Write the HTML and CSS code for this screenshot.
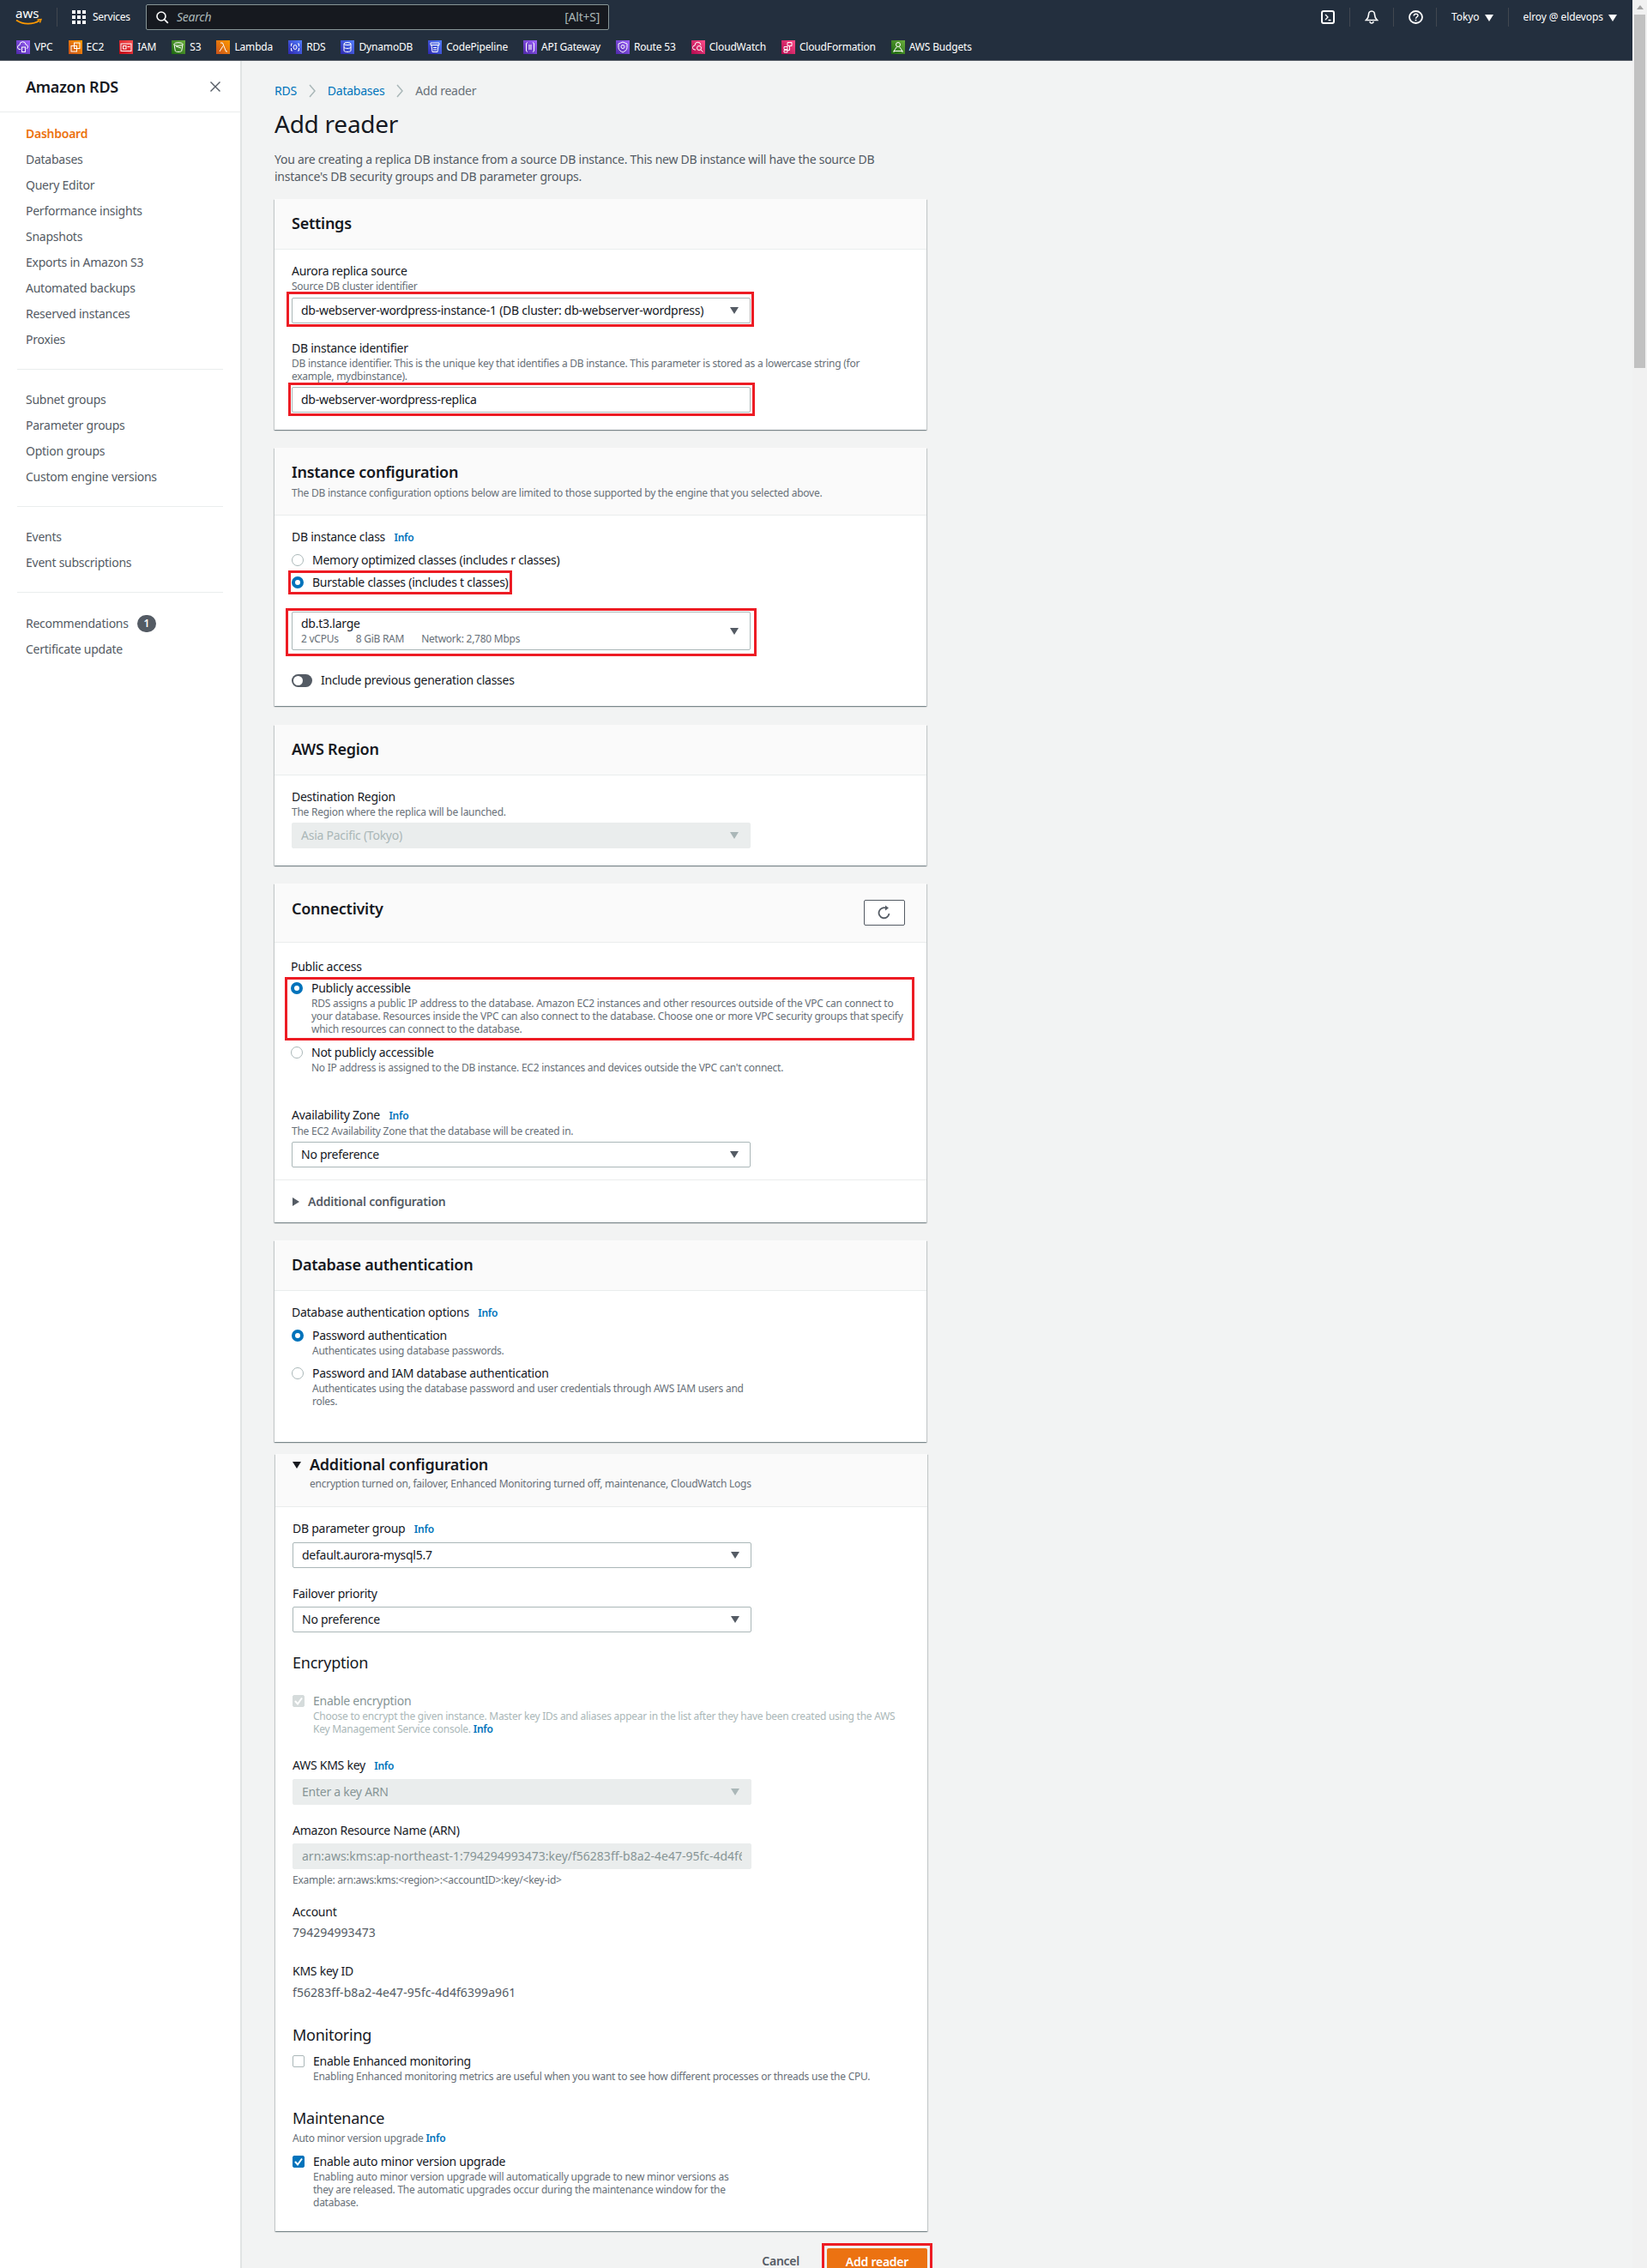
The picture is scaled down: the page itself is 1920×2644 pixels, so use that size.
FILE: index.html
```html
<!DOCTYPE html>
<html lang="en">
<head>
<meta charset="utf-8">
<title>Add reader</title>
<link rel="stylesheet" href="styles.css">
</head>
<body>
<header class="topnav">
  <div class="nav-row1">
    <svg class="aws" viewBox="0 0 31 20" width="31" height="20"><text x="0" y="11" class="aws-t">aws</text><path d="M1 13.500c8 5.500 19 5.500 27 .5" fill="none" stroke="#f90" stroke-width="1.800"/><path d="M25.500 13l4.500-.5-1.500 4" fill="none" stroke="#f90" stroke-width="1.400"/></svg>
    <span class="nav-sep first"></span>
    <svg class="grid" viewBox="0 0 16 16" width="16" height="16"><g fill="#fff"><rect x="0" y="0" width="4" height="4"/><rect x="6" y="0" width="4" height="4"/><rect x="12" y="0" width="4" height="4"/><rect x="0" y="6" width="4" height="4"/><rect x="6" y="6" width="4" height="4"/><rect x="12" y="6" width="4" height="4"/><rect x="0" y="12" width="4" height="4"/><rect x="6" y="12" width="4" height="4"/><rect x="12" y="12" width="4" height="4"/></g></svg>
    <span class="services">Services</span>
    <div class="search">
      <svg viewBox="0 0 16 16" width="16" height="16"><circle cx="7" cy="7" r="5" fill="none" stroke="#fff" stroke-width="1.600"/><path d="M10.800 10.800l4 4" stroke="#fff" stroke-width="1.800"/></svg>
      <span class="search-ph">Search</span>
      <span class="search-key">[Alt+S]</span>
    </div>
    <div class="nav-right">
      <svg class="ni" viewBox="0 0 16 16" width="16" height="16"><rect x="1" y="1" width="14" height="14" rx="2" fill="none" stroke="#fff" stroke-width="2"/><path d="M5 5l3 3-3 3M8.500 11.500H11.500" fill="none" stroke="#fff" stroke-width="1.300"/></svg>
      <span class="nav-sep"></span>
      <svg class="ni" viewBox="0 0 16 16" width="16" height="16"><path d="M8 1c-2.500 0-3.500 2-3.500 4 0 2.500-1 4.500-3 6.500h13c-2-2-3-4-3-6.500 0-2-1-4-3.500-4z" fill="none" stroke="#fff" stroke-width="1.600"/><path d="M6 13a2 2 0 0 0 4 0" fill="none" stroke="#fff" stroke-width="1.500"/></svg>
      <span class="nav-sep"></span>
      <svg class="ni help" viewBox="0 0 17 16" width="17" height="16"><ellipse cx="8.500" cy="8" rx="7.500" ry="7" fill="none" stroke="#fff" stroke-width="1.800"/><path d="M6.200 6.500c0-3 4.800-3 4.800-.5 0 1.800-2.500 1.800-2.500 3.800" fill="none" stroke="#fff" stroke-width="1.400"/><rect x="7.700" y="10.800" width="1.600" height="1.600" fill="#fff"/></svg>
      <span class="nav-sep"></span>
      <span class="nav-item">Tokyo <i class="tri white"></i></span>
      <span class="nav-sep"></span>
      <span class="nav-item last">elroy @ eldevops <i class="tri white"></i></span>
    </div>
  </div>
  <div class="nav-row2">
    <span class="svc"><svg class="si purple" viewBox="0 0 16 16"><path d="M5 10.500H4a2.500 2.500 0 0 1 0-5 3.500 3.500 0 0 1 7-.5 2.500 2.500 0 0 1 1 4.800" fill="none" stroke="#fff"/><rect x="6.500" y="8" width="4" height="5.500" fill="none" stroke="#fff"/></svg>VPC</span>
    <span class="svc"><svg class="si orange" viewBox="0 0 16 16"><rect x="3" y="6.500" width="6.500" height="6.500" fill="none" stroke="#fff"/><rect x="6.500" y="3" width="6.500" height="6.500" fill="none" stroke="#fff"/></svg>EC2</span>
    <span class="svc"><svg class="si red" viewBox="0 0 16 16"><rect x="2" y="4" width="12" height="8.500" fill="none" stroke="#fff"/><rect x="4.500" y="6.500" width="3.500" height="3.500" fill="none" stroke="#fff"/><path d="M9.500 7.500H12.500" stroke="#fff"/></svg>IAM</span>
    <span class="svc"><svg class="si green" viewBox="0 0 16 16"><ellipse cx="8" cy="4.500" rx="5" ry="1.800" fill="none" stroke="#fff"/><path d="M3 4.500l1.300 8c.3 1.200 7.100 1.200 7.400 0l1.300-8M5 7l6 2" fill="none" stroke="#fff"/></svg>S3</span>
    <span class="svc"><svg class="si orange" viewBox="0 0 16 16"><path d="M5 3h2.500L11.500 13H13M8 6.500L4 13" fill="none" stroke="#fff"/></svg>Lambda</span>
    <span class="svc"><svg class="si indigo" viewBox="0 0 16 16"><path d="M5 4H3.500v3M11 4h1.500v3M5 12H3.500V9M11 12h1.500V9" fill="none" stroke="#fff"/><ellipse cx="8" cy="8" rx="2" ry="2.500" fill="none" stroke="#fff"/></svg>RDS</span>
    <span class="svc"><svg class="si indigo" viewBox="0 0 16 16"><ellipse cx="8" cy="4" rx="4" ry="1.500" fill="none" stroke="#fff"/><path d="M4 4v8c0 2 8 2 8 0V4M4 8c0 2 8 2 8 0" fill="none" stroke="#fff"/></svg>DynamoDB</span>
    <span class="svc"><svg class="si indigo" viewBox="0 0 16 16"><path d="M3 3h10v2.500H3zM4 5.500l1 8h6l1-8M6 8.500h4M6 11h4" fill="none" stroke="#fff"/></svg>CodePipeline</span>
    <span class="svc"><svg class="si purple" viewBox="0 0 16 16"><path d="M5 2.500l-1.500 1v9l1.500 1M11 2.500l1.500 1v9l-1.500 1M7 5v6M9 5v6" fill="none" stroke="#fff"/></svg>API Gateway</span>
    <span class="svc"><svg class="si purple" viewBox="0 0 16 16"><path d="M8 2l5 2v4.500c0 3-3 4.500-5 5.500-2-1-5-2.500-5-5.500V4z" fill="none" stroke="#fff"/><circle cx="8" cy="7.500" r="2" fill="none" stroke="#fff"/></svg>Route 53</span>
    <span class="svc"><svg class="si pink" viewBox="0 0 16 16"><path d="M5 11H4a2.500 2.500 0 0 1 0-5 3.500 3.500 0 0 1 7-.5" fill="none" stroke="#fff"/><circle cx="9" cy="9" r="2.500" fill="none" stroke="#fff"/><path d="M11 11l2.500 2.500" stroke="#fff"/></svg>CloudWatch</span>
    <span class="svc"><svg class="si pink" viewBox="0 0 16 16"><path d="M7 2.500h5v4H7zM3 7.500h4v3H3zM3 11.500h4v2.500H3zM9.500 6.500v5H7" fill="none" stroke="#fff"/></svg>CloudFormation</span>
    <span class="svc"><svg class="si green" viewBox="0 0 16 16"><circle cx="8" cy="5" r="2.500" fill="none" stroke="#fff"/><path d="M6.500 7.500L3 12.500h10L9.500 7.500M3 12.500v1.500M13 12.500v1.500" fill="none" stroke="#fff"/></svg>AWS Budgets</span>
  </div>
</header>

<div class="layout">
  <aside class="side">
    <div class="side-head">
      <span class="side-title">Amazon RDS</span>
      <svg viewBox="0 0 12 12" width="12" height="12"><path d="M.5.5l11 11M11.500.5l-11 11" stroke="#545b64" stroke-width="1.400"/></svg>
    </div>
    <nav class="side-nav">
      <a class="active">Dashboard</a><a>Databases</a><a>Query Editor</a><a>Performance insights</a><a>Snapshots</a><a>Exports in Amazon S3</a><a>Automated backups</a><a>Reserved instances</a><a>Proxies</a>
      <hr>
      <a>Subnet groups</a><a>Parameter groups</a><a>Option groups</a><a>Custom engine versions</a>
      <hr>
      <a>Events</a><a>Event subscriptions</a>
      <hr>
      <a class="rec">Recommendations <b class="badge">1</b></a><a>Certificate update</a>
    </nav>
  </aside>

  <main class="main">
    <div class="crumbs"><a>RDS</a><svg viewBox="0 0 10 16" width="10" height="16"><path d="M2 1l6 7-6 7" fill="none" stroke="#aab7b8" stroke-width="1.500"/></svg><a>Databases</a><svg viewBox="0 0 10 16" width="10" height="16"><path d="M2 1l6 7-6 7" fill="none" stroke="#aab7b8" stroke-width="1.500"/></svg><span>Add reader</span></div>
    <h1>Add reader</h1>
    <p class="lead">You are creating a replica DB instance from a source DB instance. This new DB instance will have the source DB instance's DB security groups and DB parameter groups.</p>

    <section class="card settings">
      <div class="card-h h58"><h2>Settings</h2></div>
      <div class="card-b">
        <label>Aurora replica source</label>
        <div class="desc">Source DB cluster identifier</div>
        <div class="mark m-sel1"><div class="select">db-webserver-wordpress-instance-1 (DB cluster: db-webserver-wordpress)<i class="tri"></i></div></div>
        <label class="gap-id">DB instance identifier</label>
        <div class="desc w2">DB instance identifier. This is the unique key that identifies a DB instance. This parameter is stored as a lowercase string (for example, mydbinstance).</div>
        <div class="mark m-sel2"><div class="select">db-webserver-wordpress-replica</div></div>
      </div>
    </section>

    <section class="card instance">
      <div class="card-h h78"><h2>Instance configuration</h2><div class="desc h-desc">The DB instance configuration options below are limited to those supported by the engine that you selected above.</div></div>
      <div class="card-b">
        <label>DB instance class <a class="info">Info</a></label>
        <div class="radio-row r1"><i class="radio"></i>Memory optimized classes (includes r classes)</div>
        <div class="mark m-radio"><div class="radio-row"><i class="radio on"></i>Burstable classes (includes t classes)</div></div>
        <div class="mark m-sel3"><div class="select tall"><div><div class="tall-t">db.t3.large</div><div class="specs"><span>2 vCPUs</span><span>8 GiB RAM</span><span>Network: 2,780 Mbps</span></div></div><i class="tri"></i></div></div>
        <div class="toggle-row"><i class="toggle"></i>Include previous generation classes</div>
      </div>
    </section>

    <section class="card region">
      <div class="card-h h58"><h2>AWS Region</h2></div>
      <div class="card-b">
        <label>Destination Region</label>
        <div class="desc">The Region where the replica will be launched.</div>
        <div class="select disabled light region-sel">Asia Pacific (Tokyo)<i class="tri grey"></i></div>
      </div>
    </section>

    <section class="card conn">
      <div class="card-h h69 row"><h2>Connectivity</h2><button class="refresh"><svg viewBox="0 0 16 18" width="16" height="18"><path d="M13.500 10a6 6 0 1 1-3-6" fill="none" stroke="#545b64" stroke-width="1.800"/><path d="M9 .5l4 3-4 3z" fill="#545b64"/></svg></button></div>
      <div class="card-b conn-b">
        <label class="pub-l">Public access</label>
        <div class="mark m-pub">
          <div class="opt"><i class="radio on"></i><div><div class="opt-t">Publicly accessible</div><div class="desc">RDS assigns a public IP address to the database. Amazon EC2 instances and other resources outside of the VPC can connect to your database. Resources inside the VPC can also connect to the database. Choose one or more VPC security groups that specify which resources can connect to the database.</div></div></div>
        </div>
        <div class="opt not"><i class="radio"></i><div><div class="opt-t">Not publicly accessible</div><div class="desc">No IP address is assigned to the DB instance. EC2 instances and devices outside the VPC can't connect.</div></div></div>
        <label class="az">Availability Zone <a class="info">Info</a></label>
        <div class="desc">The EC2 Availability Zone that the database will be created in.</div>
        <div class="select az-sel">No preference<i class="tri"></i></div>
      </div>
      <div class="card-f"><i class="tri-r"></i>Additional configuration</div>
    </section>

    <section class="card auth">
      <div class="card-h h58"><h2>Database authentication</h2></div>
      <div class="card-b">
        <label>Database authentication options <a class="info">Info</a></label>
        <div class="opt a1"><i class="radio on"></i><div><div class="opt-t">Password authentication</div><div class="desc">Authenticates using database passwords.</div></div></div>
        <div class="opt a2"><i class="radio"></i><div class="w510"><div class="opt-t">Password and IAM database authentication</div><div class="desc">Authenticates using the database password and user credentials through AWS IAM users and roles.</div></div></div>
      </div>
    </section>

    <section class="card addl">
      <div class="card-h addl-h"><h2><i class="tri dark"></i>Additional configuration</h2><div class="desc indent">encryption turned on, failover, Enhanced Monitoring turned off, maintenance, CloudWatch Logs</div></div>
      <div class="card-b addl-b">
        <label>DB parameter group <a class="info">Info</a></label>
        <div class="select s-top">default.aurora-mysql5.7<i class="tri"></i></div>
        <label class="fo">Failover priority</label>
        <div class="select s-top">No preference<i class="tri"></i></div>
        <h3 class="enc">Encryption</h3>
        <div class="opt dis"><i class="check dis-c"><svg viewBox="0 0 14 14" width="14" height="14"><path d="M3 7l3 3.500 5-7" fill="none" stroke="#fff" stroke-width="2"/></svg></i><div><div class="opt-t">Enable encryption</div><div class="desc">Choose to encrypt the given instance. Master key IDs and aliases appear in the list after they have been created using the AWS Key Management Service console. <a class="info">Info</a></div></div></div>
        <label class="kms">AWS KMS key <a class="info">Info</a></label>
        <div class="select disabled kms-sel">Enter a key ARN<i class="tri grey"></i></div>
        <label class="arn">Amazon Resource Name (ARN)</label>
        <div class="select disabled arn-in"><span class="clip">arn:aws:kms:ap-northeast-1:794294993473:key/f56283ff-b8a2-4e47-95fc-4d4f6399a961</span></div>
        <div class="desc ex">Example: arn:aws:kms:&lt;region&gt;:&lt;accountID&gt;:key/&lt;key-id&gt;</div>
        <label class="acc">Account</label>
        <div class="val v1">794294993473</div>
        <label class="kid">KMS key ID</label>
        <div class="val">f56283ff-b8a2-4e47-95fc-4d4f6399a961</div>
        <h3 class="mon">Monitoring</h3>
        <div class="opt mon-o"><i class="check"></i><div><div class="opt-t">Enable Enhanced monitoring</div><div class="desc">Enabling Enhanced monitoring metrics are useful when you want to see how different processes or threads use the CPU.</div></div></div>
        <h3 class="mai">Maintenance</h3>
        <div class="desc mai-d">Auto minor version upgrade <a class="info">Info</a></div>
        <div class="opt mai-o"><i class="check on"><svg viewBox="0 0 14 14" width="14" height="14"><path d="M3 7l3 3.500 5-7" fill="none" stroke="#fff" stroke-width="2"/></svg></i><div class="w510"><div class="opt-t">Enable auto minor version upgrade</div><div class="desc">Enabling auto minor version upgrade will automatically upgrade to new minor versions as they are released. The automatic upgrades occur during the maintenance window for the database.</div></div></div>
      </div>
    </section>

    <div class="actions">
      <span class="cancel">Cancel</span>
      <div class="mark m-btn"><button class="primary">Add reader</button></div>
    </div>
  </main>
</div>
<div class="scrollbar"><i class="sb-up"></i><i class="sb-thumb"></i></div>
</body>
</html>
```
FILE: styles.css
```css
* { box-sizing: border-box; }
html, body { margin: 0; height: 2644px; overflow: hidden; }
body { width: 1920px; background: #f2f3f3; font-family: "Noto Sans", "Open Sans", sans-serif; font-size: 14px; letter-spacing: -0.018em; color: #16191f; line-height: 20px; position: relative; }
a { color: #0073bb; text-decoration: none; }

.topnav { width: 1903px; height: 71px; background: #232f3e; border-bottom: 1px solid #545b64; color: #fff; }
.nav-row1 { height: 40px; display: flex; align-items: center; padding-left: 18px; }
.aws { flex: none; }
.aws-t { font-size: 15px; fill: #fff; letter-spacing: 0; }
.nav-sep { width: 1px; height: 22px; background: #414750; flex: none; }
.nav-sep.first { margin-left: 17px; margin-right: 17px; }
.grid { flex: none; }
.services { font-size: 12px; margin-left: 8px; margin-right: 17px; width: 45px; white-space: nowrap; }
.search { width: 540px; height: 30px; background: #16191f; border: 1px solid #879596; border-radius: 2px; display: flex; align-items: center; padding: 0 10px; font-size: 14px; }
.search-ph { font-style: italic; color: #aab7b8; margin-left: 9px; flex: 1; }
.search-key { color: #aab7b8; }
.nav-right { margin-left: auto; display: flex; align-items: center; padding-right: 18px; font-size: 12px; letter-spacing: -0.008em; }
.nav-right .ni { margin: 0 17px; flex: none; }
.nav-right .ni.help { margin-right: 15px; }
.nav-item { padding: 0 17px; white-space: nowrap; }
.nav-item.last { padding-right: 0; }
.tri { display: inline-block; width: 0; height: 0; border-left: 5px solid transparent; border-right: 5px solid transparent; border-top: 8px solid #545b64; }
.tri.white { border-top-color: #fff; margin-left: 3px; vertical-align: -1px; }
.tri.grey { border-top-color: #aab7b8; }
.nav-row2 { height: 30px; display: flex; align-items: center; padding-left: 19px; font-size: 12px; gap: 18px; white-space: nowrap; letter-spacing: -0.014em; }
.svc { display: flex; align-items: center; gap: 5px; }
.si { width: 16px; height: 16px; display: block; flex: none; }
.purple { background: linear-gradient(45deg, #4d27a8, #a166ff); }
.orange { background: linear-gradient(45deg, #c8511b, #ff9900); }
.red { background: linear-gradient(45deg, #bd0816, #ff5252); }
.green { background: linear-gradient(45deg, #1b660f, #6cae3e); }
.indigo { background: linear-gradient(45deg, #2e27ad, #527fff); }
.pink { background: linear-gradient(45deg, #b0084d, #ff4f8b); }

.layout { display: flex; width: 1903px; }
.side { width: 282px; height: 2573px; background: #fff; border-right: 2px solid #e1e4e4; flex: none; }
.side-head { height: 60px; padding: 1px 23px 0 30px; border-bottom: 1px solid #eaeded; display: flex; align-items: center; justify-content: space-between; margin-bottom: 10px; }
.side-title { font-size: 18px; font-weight: 600; }
.side-nav a { display: block; height: 30px; line-height: 30px; padding-left: 30px; color: #545b64; }
.side-nav a.active { color: #ec7211; font-weight: 600; }
.side-nav hr { border: 0; height: 1px; background: #eaeded; margin: 19px 20px 20px 20px; width: 240px; }
.side-nav .rec { display: flex; align-items: center; gap: 10px; height: 31px; }
.badge { display: inline-block; width: 22px; height: 20px; line-height: 20px; border-radius: 10px; background: #545b64; color: #fff; text-align: center; font-size: 12px; font-weight: 600; }

.main { padding: 0 0 0 38px; flex: 1; position: relative; }
.crumbs { display: flex; align-items: center; gap: 13px; height: 20px; margin-top: 25px; color: #687078; }
h1 { font-size: 28px; font-weight: 400; line-height: 36px; margin: 10px 0 0; }
.lead { width: 720px; margin: 14px 0 0; color: #545b64; }

.card { width: 760px; background: #fff; box-shadow: 0 1px 1px 0 rgba(0,28,36,.3), 1px 1px 1px 0 rgba(0,28,36,.15), -1px 1px 1px 0 rgba(0,28,36,.15); margin-bottom: 21px; }
.settings { margin-top: 16px; height: 269px; }
.instance { height: 301px; margin-bottom: 22px; }
.region { height: 164px; }
.conn { height: 395px; }
.auth { height: 235px; margin-bottom: 14px; }
.addl { height: 906px; margin-left: 1px; margin-bottom: 14px; }
.card-h { background: #fafafa; border-bottom: 1px solid #eaeded; padding: 14px 20px; }
.h58 { height: 59px; }
.h78 { height: 79px; }
.h69 { height: 69px; padding-top: 15px; }
.row { display: flex; justify-content: space-between; align-items: flex-start; }
h2 { font-size: 18px; font-weight: 600; line-height: 28px; margin: 0; }
.desc { font-size: 12px; line-height: 15px; color: #687078; }
.h-desc { margin-top: 3px; }
.indent { padding-left: 20px; margin-top: 1px; }
.card-b { padding: 15px 20px 0; }
label { display: block; line-height: 20px; }
.info { font-size: 12px; font-weight: 600; margin-left: 7px; }
.desc .info { margin-left: 0; }
.select { position: relative; width: 535px; height: 30px; background: #fff; border: 1px solid #aab7b8; border-radius: 2px; display: flex; align-items: center; padding: 0 10px; white-space: nowrap; overflow: hidden; }
.select .tri { position: absolute; right: 13px; top: 50%; margin-top: -4px; }
.select.tall { height: 45px; }
.tall-t { line-height: 18px; }
.specs { display: flex; gap: 20px; font-size: 12px; color: #687078; line-height: 17px; }
.select.disabled { background: #eaeded; border-color: #eaeded; color: #879596; }
.select.light { color: #aab7b8; }
.clip { display: block; overflow: hidden; width: 100%; letter-spacing: 0; }
.mark { border: 3px solid #ed1c24; }
.m-sel1 { width: 545px; height: 41px; margin: -1px 0 0 -6px; padding: 4px 1px 2px 3px; }
.gap-id { margin-top: 15px; }
.w2 { width: 700px; }
.m-sel2 { width: 544px; height: 39px; margin: 0 0 0 -4px; padding: 2px 2px 1px 1px; }
.r1 { margin-top: 3px; }
.radio-row { display: flex; align-items: center; gap: 10px; height: 25px; white-space: nowrap; }
.radio { width: 14px; height: 14px; border-radius: 50%; border: 1px solid #aab7b8; background: #fff; flex: none; display: block; }
.radio.on { border: 4px solid #0073bb; }
.m-radio { width: 261px; height: 28px; margin-left: -4px; padding-left: 1px; display: flex; align-items: center; }
.m-sel3 { width: 549px; height: 56px; margin: 16px 0 0 -7px; padding: 1px 4px 4px 4px; }
.toggle-row { display: flex; align-items: center; gap: 10px; margin-top: 18px; }
.toggle { width: 24px; height: 15px; border-radius: 8px; background: #545b64; position: relative; display: block; }
.toggle::after { content: ""; position: absolute; left: 2px; top: 2px; width: 11px; height: 11px; background: #fff; border-radius: 50%; }
.region-sel { margin-top: 5px; }
.refresh { width: 48px; height: 30px; background: #fff; border: 1px solid #545b64; border-radius: 2px; margin-right: 5px; margin-top: 4px; padding: 0; display: flex; align-items: center; justify-content: center; }
.conn-b { height: 276px; padding-top: 16px; }
.pub-l { margin-left: -1px; margin-top: 2px; }
.opt { display: flex; gap: 10px; align-items: flex-start; }
.opt .radio, .opt .check { margin-top: 3px; }
.opt-t { line-height: 20px; }
.m-pub { width: 734px; height: 74px; margin: 2px 0 0 -8px; padding-left: 4px; }
.not { margin-top: 4px; margin-left: -1px; }
.az { margin-top: 38px; }
.az-sel { margin-top: 5px; }
.card-f { height: 50px; border-top: 1px solid #eaeded; display: flex; align-items: center; padding-left: 21px; font-weight: 600; color: #545b64; gap: 10px; }
.tri-r { width: 0; height: 0; border-top: 5px solid transparent; border-bottom: 5px solid transparent; border-left: 8px solid #545b64; }
.a1 { margin-top: 6px; }
.a2 { margin-top: 9px; }
.w510 { width: 510px; }
.addl-h { height: 62px; padding: 0 20px; }
.addl-h h2 { position: relative; top: -2px; margin-bottom: -2px; }
.tri.dark { border-top-color: #16191f; margin-right: 10px; vertical-align: 2px; }
.addl-b { padding-top: 15px; }
.s-top { margin-top: 5px; }
.fo { margin-top: 20px; }
h3 { font-size: 18px; font-weight: 400; line-height: 24px; margin: 0; }
.enc { margin-top: 23px; }
.dis { margin-top: 23px; color: #879596; }
.dis .desc { color: #aab7b8; }
.check { width: 14px; height: 14px; border: 1px solid #aab7b8; border-radius: 2px; display: block; flex: none; background: #fff; position: relative; }
.check svg { position: absolute; left: -1px; top: -1px; }
.check.on { background: #0073bb; border-color: #0073bb; }
.check.dis-c { background: #d5dbdb; border-color: #d5dbdb; }
.kms { margin-top: 25px; }
.kms-sel { margin-top: 5px; }
.arn { margin-top: 20px; }
.arn-in { margin-top: 5px; }
.ex { margin-top: 5px; }
.acc { margin-top: 20px; }
.val { margin-top: 5px; color: #545b64; letter-spacing: 0.005em; }
.val.v1 { margin-top: 4px; }
.kid { margin-top: 25px; }
.mon { margin-top: 27px; }
.mon-o { margin-top: 9px; }
.mai { margin-top: 29px; }
.mai-d { margin-top: 4px; }
.mai-o { margin-top: 10px; }

.actions { display: flex; justify-content: flex-end; align-items: flex-start; width: 767px; gap: 26px; }
.cancel { font-weight: 600; color: #545b64; margin-top: 11px; }
.m-btn { width: 129px; height: 42px; padding: 3px 3px 0; }
.primary { width: 117px; height: 30px; padding: 0; background: #ec7211; border: 0; border-radius: 2px; color: #fff; font-family: "Noto Sans", sans-serif; font-size: 14px; font-weight: 600; letter-spacing: -0.018em; }

.scrollbar { position: absolute; right: 0; top: 0; width: 17px; height: 2644px; background: #f1f1f1; }
.sb-up { position: absolute; left: 5px; top: 6px; width: 0; height: 0; border-left: 4px solid transparent; border-right: 4px solid transparent; border-bottom: 5px solid #a3a3a3; }
.sb-thumb { position: absolute; left: 2px; top: 17px; width: 13px; height: 412px; background: #c1c1c1; }
```
